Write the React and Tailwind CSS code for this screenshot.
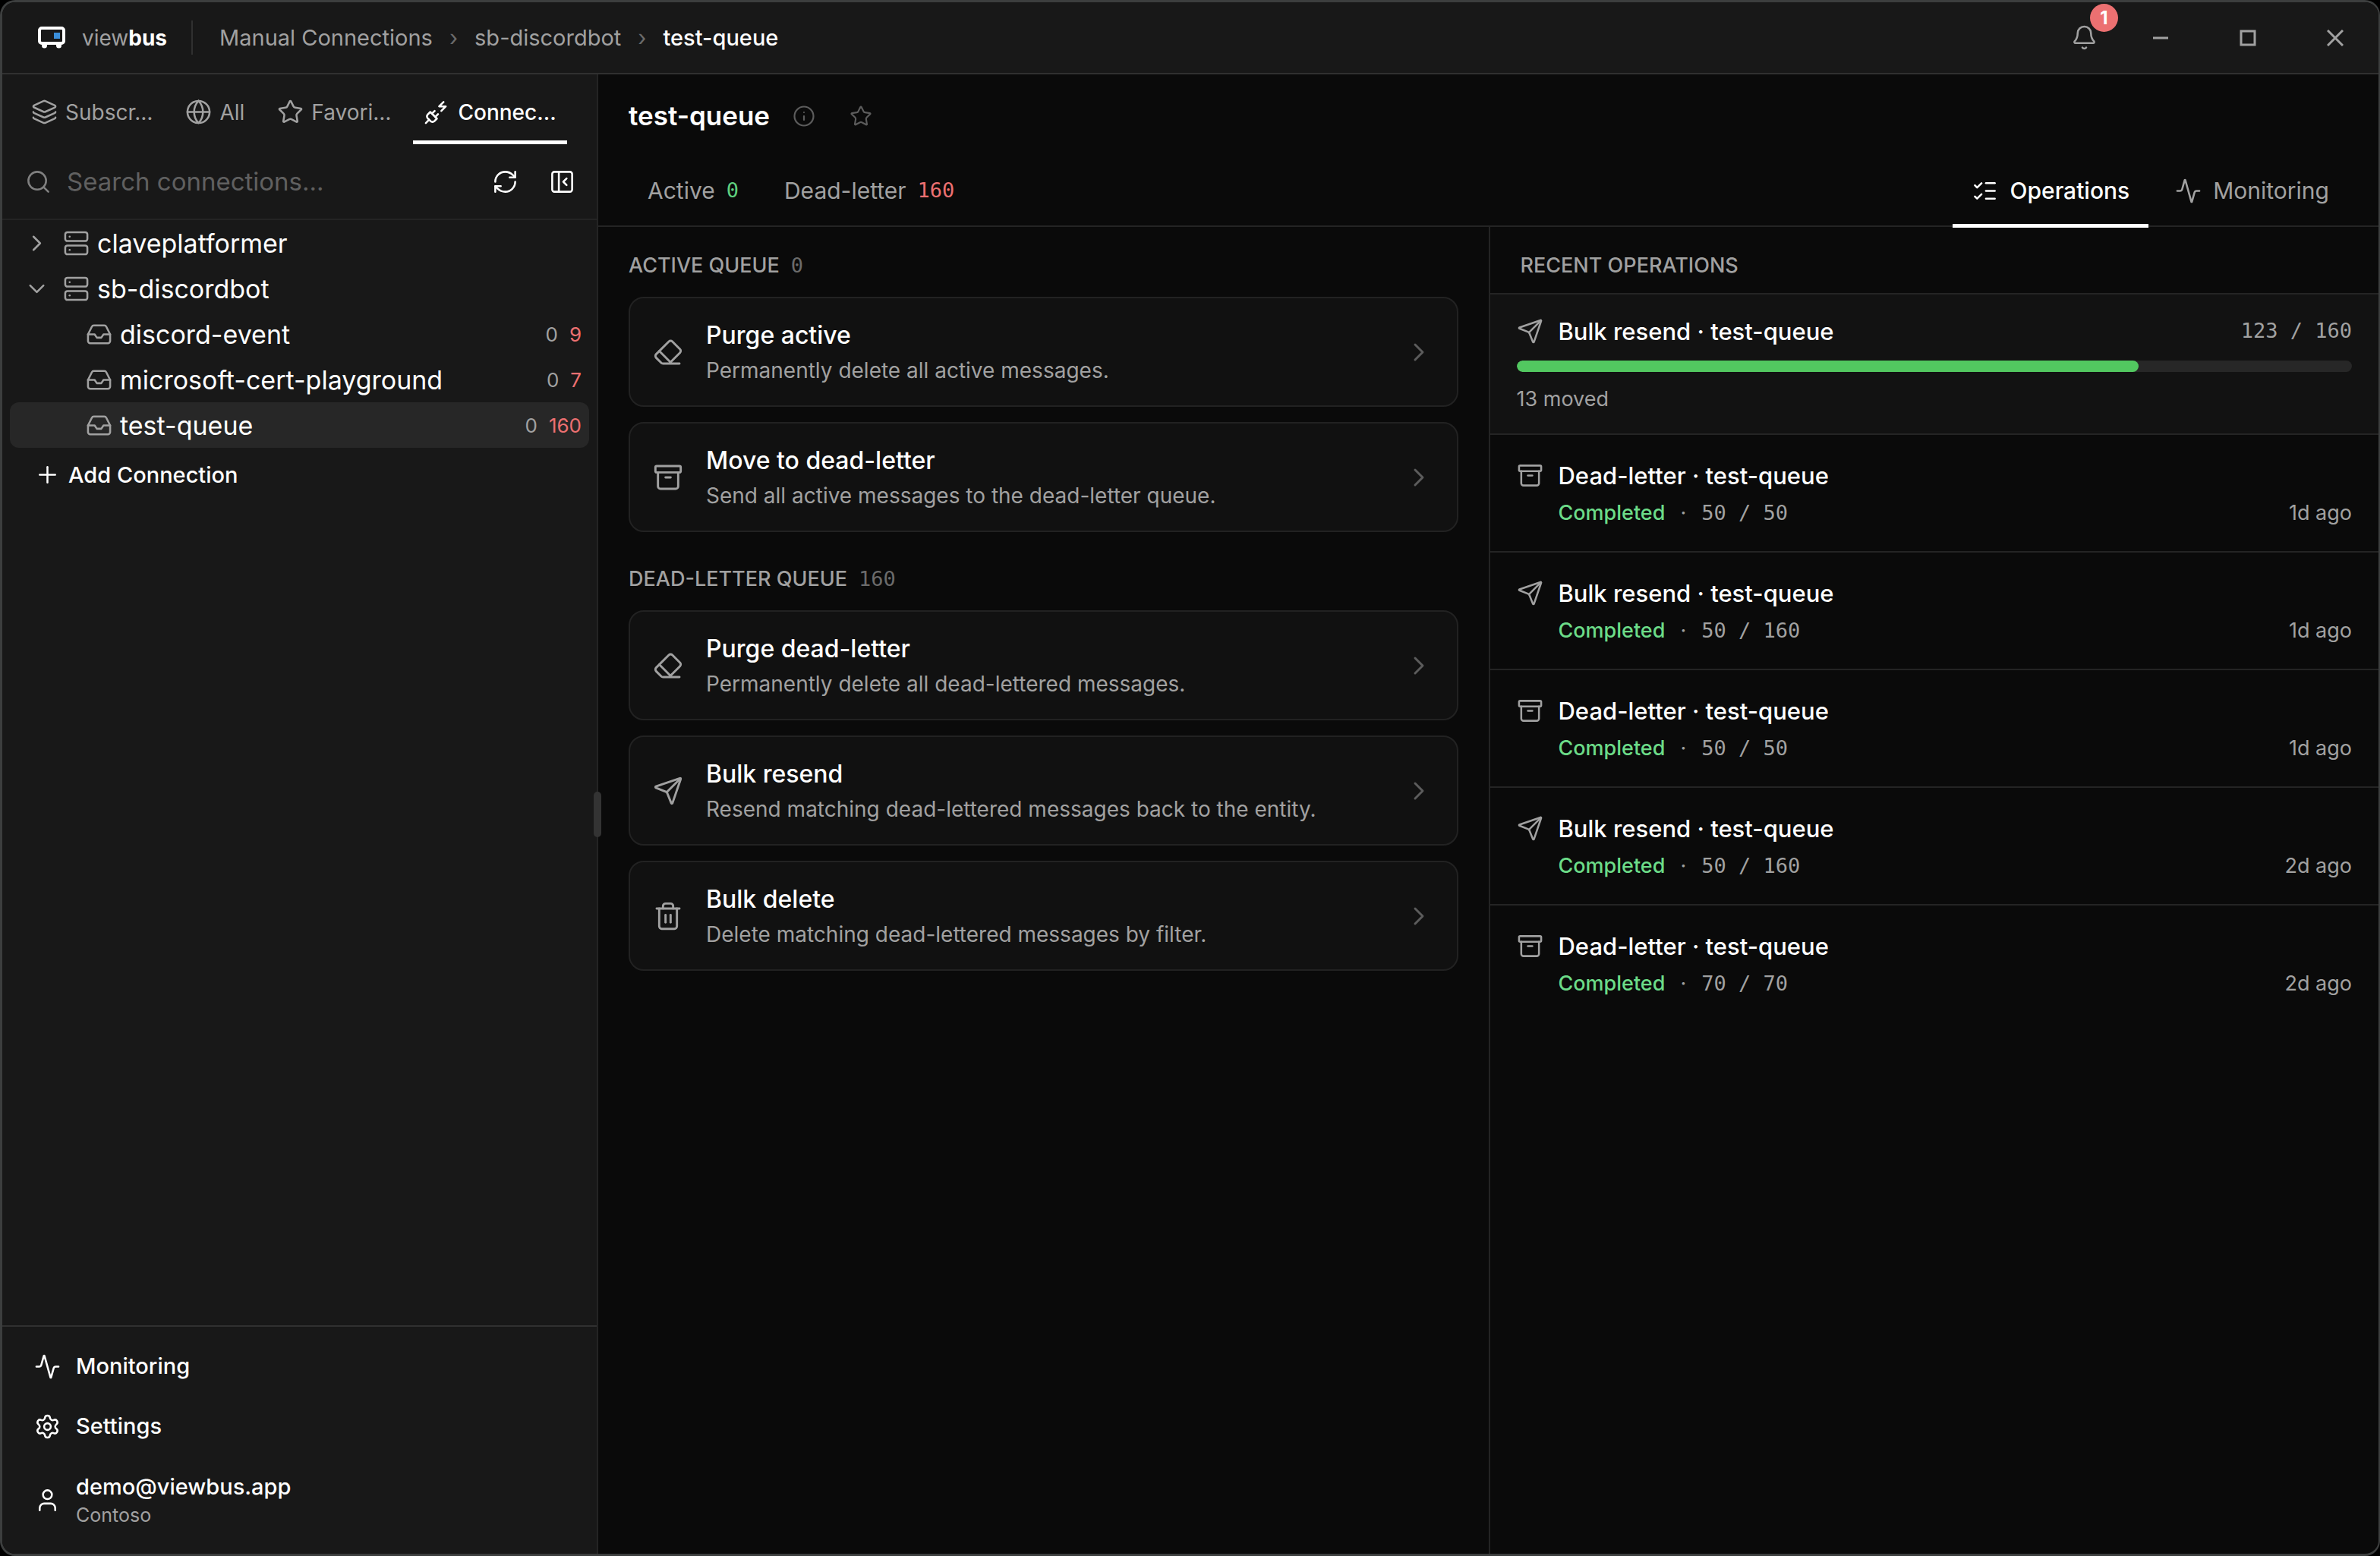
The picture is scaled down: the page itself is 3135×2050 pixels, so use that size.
import {
  Activity,
  Archive,
  Bell,
  ChevronDown,
  ChevronRight,
  Eraser,
  Globe,
  Inbox,
  Info,
  Layers,
  ListChecks,
  PanelLeftClose,
  Plus,
  PlugZap,
  RefreshCw,
  Search,
  Send,
  Server,
  Settings,
  Star,
  Trash2,
  User
} from "lucide-react";

const sidebarTabs = [
  { label: "Subscr…", icon: Layers },
  { label: "All", icon: Globe },
  { label: "Favori…", icon: Star },
  { label: "Connec…", icon: PlugZap, active: true }
];

const queues = [
  { name: "discord-event", active: 0, dead: 9 },
  { name: "microsoft-cert-playground", active: 0, dead: 7 },
  { name: "test-queue", active: 0, dead: 160, selected: true }
];

const activeActions = [
  { title: "Purge active", description: "Permanently delete all active messages.", icon: Eraser },
  { title: "Move to dead-letter", description: "Send all active messages to the dead-letter queue.", icon: Archive }
];

const deadLetterActions = [
  { title: "Purge dead-letter", description: "Permanently delete all dead-lettered messages.", icon: Eraser },
  { title: "Bulk resend", description: "Resend matching dead-lettered messages back to the entity.", icon: Send },
  { title: "Bulk delete", description: "Delete matching dead-lettered messages by filter.", icon: Trash2 }
];

const operations = [
  { title: "Dead-letter · test-queue", count: "50 / 50", when: "1d ago", icon: Archive },
  { title: "Bulk resend · test-queue", count: "50 / 160", when: "1d ago", icon: Send },
  { title: "Dead-letter · test-queue", count: "50 / 50", when: "1d ago", icon: Archive },
  { title: "Bulk resend · test-queue", count: "50 / 160", when: "2d ago", icon: Send },
  { title: "Dead-letter · test-queue", count: "70 / 70", when: "2d ago", icon: Archive }
];

function Logo() {
  return (
    <svg width="36" height="30" viewBox="0 0 36 30" fill="none" aria-hidden="true">
      <rect x="2" y="2" width="32" height="20" rx="3" stroke="#fff" strokeWidth="4" />
      <rect x="21" y="8" width="8" height="8" fill="#3b8fdb" />
      <path d="M5 22h7v3a3.5 3.5 0 0 1-7 0zM24 22h7v3a3.5 3.5 0 0 1-7 0z" fill="#fff" />
    </svg>
  );
}

function TitleBar() {
  return (
    <header className="flex h-[95px] shrink-0 items-center border-b-2 border-[#303030] bg-[#181818] pl-[47px] text-[29px] leading-[40px] text-[#a1a1a1]">
      <Logo />
      <span className="ml-[22px] text-[28px]">
        view<b className="font-bold text-white">bus</b>
      </span>
      <div className="ml-[32px] h-[45px] w-[2px] bg-[#303030]" />
      <nav aria-label="Breadcrumb" className="ml-[35px] flex items-center gap-[22px]">
        <a href="#manual">Manual Connections</a>
        <span className="text-[#6b6b6b]">›</span>
        <a href="#sb-discordbot">sb-discordbot</a>
        <span className="text-[#6b6b6b]">›</span>
        <a href="#test-queue" className="font-medium text-white">test-queue</a>
      </nav>

      <div className="ml-auto flex self-stretch">
        <button aria-label="Notifications" className="relative flex w-[85px] items-center justify-center">
          <Bell size={35} strokeWidth={1.75} />
          <span className="absolute top-[2px] left-[50px] flex h-[37px] w-[37px] items-center justify-center rounded-full bg-[#ec7071] text-[24px] font-bold text-white">
            1
          </span>
        </button>
        <button aria-label="Minimize" className="flex w-[115px] items-center justify-center">
          <svg width="22" height="22" viewBox="0 0 22 22" stroke="currentColor" strokeWidth="3" fill="none">
            <path d="M1 11h20" />
          </svg>
        </button>
        <button aria-label="Maximize" className="flex w-[115px] items-center justify-center">
          <svg width="22" height="22" viewBox="0 0 22 22" stroke="currentColor" strokeWidth="3" fill="none">
            <rect x="2" y="2" width="18" height="18" />
          </svg>
        </button>
        <button aria-label="Close" className="flex w-[115px] items-center justify-center">
          <svg width="22" height="22" viewBox="0 0 22 22" stroke="currentColor" strokeWidth="3" fill="none">
            <path d="M1 1l20 20M21 1L1 21" />
          </svg>
        </button>
      </div>
    </header>
  );
}

function Sidebar() {
  return (
    <aside className="relative flex w-[785px] shrink-0 flex-col border-r-2 border-[#242424] bg-[#181818]">
      <div className="flex gap-[15px] pt-[12px] pl-[24px]">
        {sidebarTabs.map(({ label, icon: Icon, active }) => (
          <button
            key={label}
            className={
              active
                ? "flex h-[80px] items-center gap-[10px] border-b-5 border-white px-[14px] text-[28px] font-medium whitespace-nowrap text-white"
                : "flex h-[80px] items-center gap-[10px] border-b-5 border-transparent px-[14px] text-[28px] whitespace-nowrap text-[#a1a1a1]"
            }
          >
            <Icon size={35} strokeWidth={1.75} className="shrink-0" />
            {label}
          </button>
        ))}
      </div>

      {/* SEARCH */}
      <div className="flex h-[100px] shrink-0 items-center border-b-2 border-[#242424] pr-[13px] pl-[30px]">
        <Search size={35} strokeWidth={1.75} className="shrink-0 text-[#808080]" />
        <input
          type="text"
          aria-label="Search connections"
          placeholder="Search connections..."
          className="ml-[20px] min-w-0 flex-1 bg-transparent text-[33px] leading-[45px] text-white outline-none placeholder:text-[#606060]"
        />
        <button aria-label="Refresh" className="flex h-[65px] w-[65px] items-center justify-center">
          <RefreshCw size={35} strokeWidth={1.75} />
        </button>
        <button aria-label="Collapse sidebar" className="ml-[10px] flex h-[65px] w-[65px] items-center justify-center">
          <PanelLeftClose size={35} strokeWidth={1.75} />
        </button>
      </div>

      {/* TREE */}
      <div className="flex flex-1 flex-col px-[10px] text-[34px] leading-[45px]">
        <button className="flex h-[60px] items-center gap-[10px] px-[10px]">
          <span className="flex w-[50px] justify-center text-[#a1a1a1]">
            <ChevronRight size={35} strokeWidth={1.75} />
          </span>
          <Server size={35} strokeWidth={1.75} className="text-[#a1a1a1]" />
          claveplatformer
        </button>
        <button className="flex h-[60px] items-center gap-[10px] px-[10px]">
          <span className="flex w-[50px] justify-center text-[#a1a1a1]">
            <ChevronDown size={35} strokeWidth={1.75} />
          </span>
          <Server size={35} strokeWidth={1.75} className="text-[#a1a1a1]" />
          sb-discordbot
        </button>
        {queues.map((q) => (
          <button
            key={q.name}
            className={
              q.selected
                ? "flex h-[60px] items-center gap-[10px] rounded-[12px] bg-[#272727] pr-[10px] pl-[100px]"
                : "flex h-[60px] items-center gap-[10px] rounded-[12px] pr-[10px] pl-[100px]"
            }
          >
            <Inbox size={35} strokeWidth={1.75} className="text-[#a1a1a1]" />
            {q.name}
            <span className="ml-auto flex gap-[15px] text-[26px]">
              <span className="text-[#a1a1a1]">{q.active}</span>
              <span className="text-[#ec7071]">{q.dead}</span>
            </span>
          </button>
        ))}
        <button className="mt-[5px] flex h-[60px] items-center gap-[10px] px-[32px] text-[29px] font-medium">
          <Plus size={35} strokeWidth={1.75} />
          Add Connection
        </button>
      </div>

      {/* FOOTER */}
      <div className="flex flex-col gap-[5px] border-t-2 border-[#303030] px-[42px] py-[15px] text-[29px] leading-[40px] font-medium">
        <button className="flex h-[74px] items-center gap-[20px]">
          <Activity size={35} strokeWidth={1.75} />
          Monitoring
        </button>
        <button className="flex h-[74px] items-center gap-[20px]">
          <Settings size={35} strokeWidth={1.75} />
          Settings
        </button>
        <button className="flex h-[111px] items-center gap-[20px] text-left">
          <User size={35} strokeWidth={1.75} />
          <span className="flex flex-col">
            demo@viewbus.app
            <span className="text-[25px] leading-[35px] font-normal text-[#a1a1a1]">Contoso</span>
          </span>
        </button>
      </div>

      {/* resize handle */}
      <div className="absolute top-1/2 -right-[6px] z-10 h-[60px] w-[10px] -translate-y-1/2 rounded-full bg-[#333333]" />
    </aside>
  );
}

function EntityHeader() {
  return (
    <div className="shrink-0 border-b-2 border-[#242424] px-[40px]">
      <div className="flex h-[109px] items-center text-[#5c5c5c]">
        <h1 className="text-[35px] leading-[45px] font-semibold text-white">test-queue</h1>
        <button aria-label="Details" className="ml-[30px]">
          <Info size={30} strokeWidth={1.75} />
        </button>
        <button aria-label="Add to favorites" className="ml-[45px]">
          <Star size={30} strokeWidth={1.75} />
        </button>
      </div>
      <div className="-mb-[3px] flex h-[93px] gap-[10px] text-[30px] leading-[40px] text-[#a1a1a1]">
        <button className="flex items-center gap-[15px] border-b-5 border-transparent px-[25px]">
          Active
          <span className="font-['DejaVu_Sans_Mono'] text-[27px] text-[#5fd07f]">0</span>
        </button>
        <button className="flex items-center gap-[15px] border-b-5 border-transparent px-[25px]">
          Dead-letter
          <span className="font-['DejaVu_Sans_Mono'] text-[27px] text-[#ec7071]">160</span>
        </button>
        <button className="ml-auto flex items-center gap-[15px] border-b-5 border-white px-[25px] font-medium text-white">
          <ListChecks size={35} strokeWidth={1.75} />
          Operations
        </button>
        <button className="flex items-center gap-[15px] border-b-5 border-transparent px-[25px]">
          <Activity size={35} strokeWidth={1.75} />
          Monitoring
        </button>
      </div>
    </div>
  );
}

function ActionSection({ title, count, actions }) {
  return (
    <section className="mb-[42px]">
      <h2 className="mb-[21px] flex items-center gap-[15px] text-[27px] leading-[40px] font-medium text-[#a1a1a1]">
        {title}
        <span className="font-['DejaVu_Sans_Mono'] font-normal text-[#6b6b6b]">{count}</span>
      </h2>
      <div className="flex flex-col gap-[20px]">
        {actions.map(({ title: name, description, icon: Icon }) => (
          <button
            key={name}
            className="flex h-[145px] items-center gap-[30px] rounded-[20px] border-2 border-[#222222] bg-[#111111] px-[30px] text-left"
          >
            <Icon size={40} strokeWidth={1.75} className="shrink-0 text-[#a1a1a1]" />
            <span className="flex flex-1 flex-col gap-[4px]">
              <span className="text-[32px] leading-[45px] font-medium">{name}</span>
              <span className="text-[28px] leading-[40px] text-[#a1a1a1]">{description}</span>
            </span>
            <ChevronRight size={40} strokeWidth={1.75} className="shrink-0 text-[#5c5c5c]" />
          </button>
        ))}
      </div>
    </section>
  );
}

function RecentOperations() {
  return (
    <section className="border-l-2 border-[#242424]">
      <h2 className="border-b-2 border-[#242424] px-[40px] pt-[31px] pb-[16px] text-[27px] leading-[40px] font-medium text-[#a1a1a1]">
        RECENT OPERATIONS
      </h2>

      {/* running operation */}
      <div className="border-b-2 border-[#242424] bg-[#121212] px-[35px] pt-[26px] pb-[25px] text-[#a1a1a1]">
        <div className="flex items-center gap-[20px]">
          <Send size={35} strokeWidth={1.75} />
          <span className="text-[31px] leading-[45px] font-medium text-white">Bulk resend · test-queue</span>
          <span className="ml-auto font-['DejaVu_Sans_Mono'] text-[27px]">123 / 160</span>
        </div>
        <div
          role="progressbar"
          aria-label="Bulk resend progress"
          className="mt-[16px] h-[15px] overflow-hidden rounded-full bg-[#272727]"
        >
          <div className="h-full rounded-full bg-[#52c860]" style={{ width: "74.5%" }} />
        </div>
        <p className="mt-[16px] text-[27px] leading-[40px]">13 moved</p>
      </div>

      <ul className="divide-y-2 divide-[#242424]">
        {operations.map(({ title, count, when, icon: Icon }, i) => (
          <li key={i} className="px-[35px] pt-[31px] pb-[30px] text-[27px] leading-[40px] text-[#a1a1a1]">
            <div className="flex items-center gap-[20px]">
              <Icon size={35} strokeWidth={1.75} />
              <span className="text-[31px] leading-[45px] font-medium text-white">{title}</span>
            </div>
            <div className="mt-[7px] flex items-center gap-[20px] pl-[55px]">
              <span className="font-medium text-[#6cdc88]">Completed</span>
              <span>·</span>
              <span className="font-['DejaVu_Sans_Mono']">{count}</span>
              <span className="ml-auto">{when}</span>
            </div>
          </li>
        ))}
      </ul>
    </section>
  );
}

export default function App() {
  return (
    <div className="flex min-h-screen flex-col bg-black font-[Inter,sans-serif] text-white">
      <div className="flex flex-1 flex-col overflow-hidden rounded-[20px] border-3 border-r-2 border-[#3c3e3e] bg-[#0a0a0a]">
        <TitleBar />
        <div className="flex flex-1">
          <Sidebar />
          <main className="flex min-w-0 flex-1 flex-col">
            <EntityHeader />
            <div className="grid flex-1 grid-cols-2">
              <div className="px-[40px] pt-[31px]">
                <ActionSection title="ACTIVE QUEUE" count="0" actions={activeActions} />
                <ActionSection title="DEAD-LETTER QUEUE" count="160" actions={deadLetterActions} />
              </div>
              <RecentOperations />
            </div>
          </main>
        </div>
      </div>
    </div>
  );
}
